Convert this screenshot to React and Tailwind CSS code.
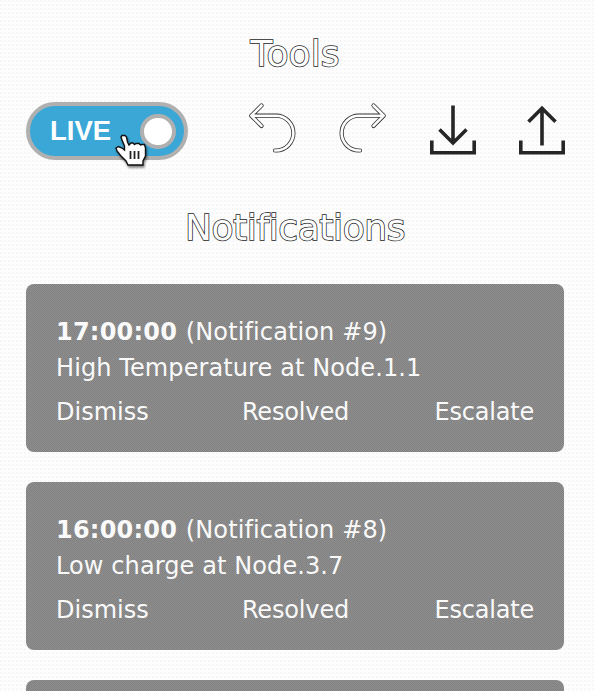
import React from "react";

const notifications = [
  { id: 9, time: "17:00:00", message: "High Temperature at Node.1.1" },
  { id: 8, time: "16:00:00", message: "Low charge at Node.3.7" },
];

function Heading({ children, className }) {
  return (
    <h2
      className={`text-center font-normal text-[#fefefe] [-webkit-text-stroke:1.5px_#222] [paint-order:stroke_fill] ${className}`}
    >
      {children}
    </h2>
  );
}

function HandCursor() {
  return (
    <svg className="absolute left-[83px] top-[26px] drop-shadow-[1px_2px_1px_rgba(0,0,0,0.5)]" width="36" height="38" viewBox="0 0 36 38">
      <path
        d="M8 5L9 3.5H12L13.5 5L14.5 10L16 13L18 11H20L21.5 12.5L23 11.5H26L27.5 13L29 12.5H31.5L32.5 16V24L30 29V33H15L13 29L8 24L4 19L3 16L5.5 14.5L9 16L11.5 18V14L9 8Z"
        fill="#fff"
        stroke="#111"
        strokeWidth="1.4"
      />
      <path d="M17.5 19V27M21.5 19V27M25.5 19V27" stroke="#222" strokeWidth="1.8" />
    </svg>
  );
}

const turnPath = "M14 4.5L3.8 14.7L14 24.9M4.5 14.7H28.5A17.4 17.4 0 0 1 28.5 49.5H27.5";

function TurnArrow({ flipped }) {
  return (
    <svg className={flipped ? "-scale-x-100" : ""} width="48" height="52" viewBox="0 0 48 52">
      <g fill="none" strokeLinecap="round" strokeLinejoin="round" transform="translate(-0.5 0)">
        <path d={turnPath} stroke="#333" strokeWidth="4.2" />
        <path d={turnPath} stroke="#fefefe" strokeWidth="2.6" />
      </g>
    </svg>
  );
}

function TransferIcon({ up }) {
  return (
    <svg className="overflow-visible" width="46" height="54" viewBox="0 0 46 54" fill="none" stroke="#262626" strokeWidth="3.6">
      <path d="M1.8 39.5V51.7H44.2V39.5" />
      {up ? <path d="M23 44.5V8M9.5 20.7L23 7.2L36.5 20.7" /> : <path d="M23 4.5V41M9.5 28.5L23 42L36.5 28.5" />}
    </svg>
  );
}

function Card({ children }) {
  return (
    <article className="h-[168px] shrink-0 rounded-[8px] bg-[#888888] bg-[conic-gradient(#909090_25%,#808080_0_50%,#909090_0_75%,#808080_0)] bg-[length:2px_2px] px-[30px] pt-[30px] text-[24px] leading-[36px] text-[#fafafa]">
      {children}
    </article>
  );
}

function Notification({ id, time, message }) {
  return (
    <Card>
      <p className="whitespace-nowrap">
        <strong className="mr-px tracking-[0.22px]">{time}</strong>{" "}
        <span className="tracking-[0.12px]">(Notification #{id})</span>
      </p>
      <p className="whitespace-nowrap tracking-[0.1px]">{message}</p>
      <div className="mt-2 grid grid-cols-3">
        <button className="text-left">Dismiss</button>
        <button className="pl-px text-center tracking-[-0.15px]">Resolved</button>
        <button className="text-right tracking-[-0.2px]">Escalate</button>
      </div>
    </Card>
  );
}

export default function App() {
  return (
    <main className="flex h-[691px] w-[594px] flex-col overflow-hidden bg-[#fdfdfd] bg-[radial-gradient(circle_at_1px_1px,#f7f7f7_1px,transparent_1px)] bg-[length:4px_4px] pl-[26px] pr-[30px] pt-[30px] font-['DejaVu_Sans',sans-serif]">
      <Heading className="h-[46px] text-[36px] leading-[47px] tracking-[0.1px]">Tools</Heading>
      <div className="-mr-px mt-[25px] flex h-[60px] items-start justify-between">
        <div className="relative mt-[1px] flex h-[58px] w-[162px] shrink-0 items-center justify-between rounded-full border-4 border-[#b0b0b0] bg-[#3ba7d7] pl-[20px] pr-[8px]">
          <span className="font-['Liberation_Sans',sans-serif] text-[27.5px] font-bold leading-none text-white">LIVE</span>
          <span className="h-[35px] w-[36px] rounded-full border-4 border-[#b0b0b0] bg-white" />
          <HandCursor />
        </div>
        <div className="flex w-[317px] shrink-0 items-start justify-between">
          <TurnArrow />
          <TurnArrow flipped />
          <TransferIcon />
          <TransferIcon up />
        </div>
      </div>
      <Heading className="mt-[44px] h-[46px] text-[36px] leading-[47px] tracking-[-0.4px]">Notifications</Heading>
      <section className="mt-[34px] flex flex-col gap-[30px]">
        {notifications.map((item) => (
          <Notification key={item.id} {...item} />
        ))}
        <Card />
      </section>
    </main>
  );
}
